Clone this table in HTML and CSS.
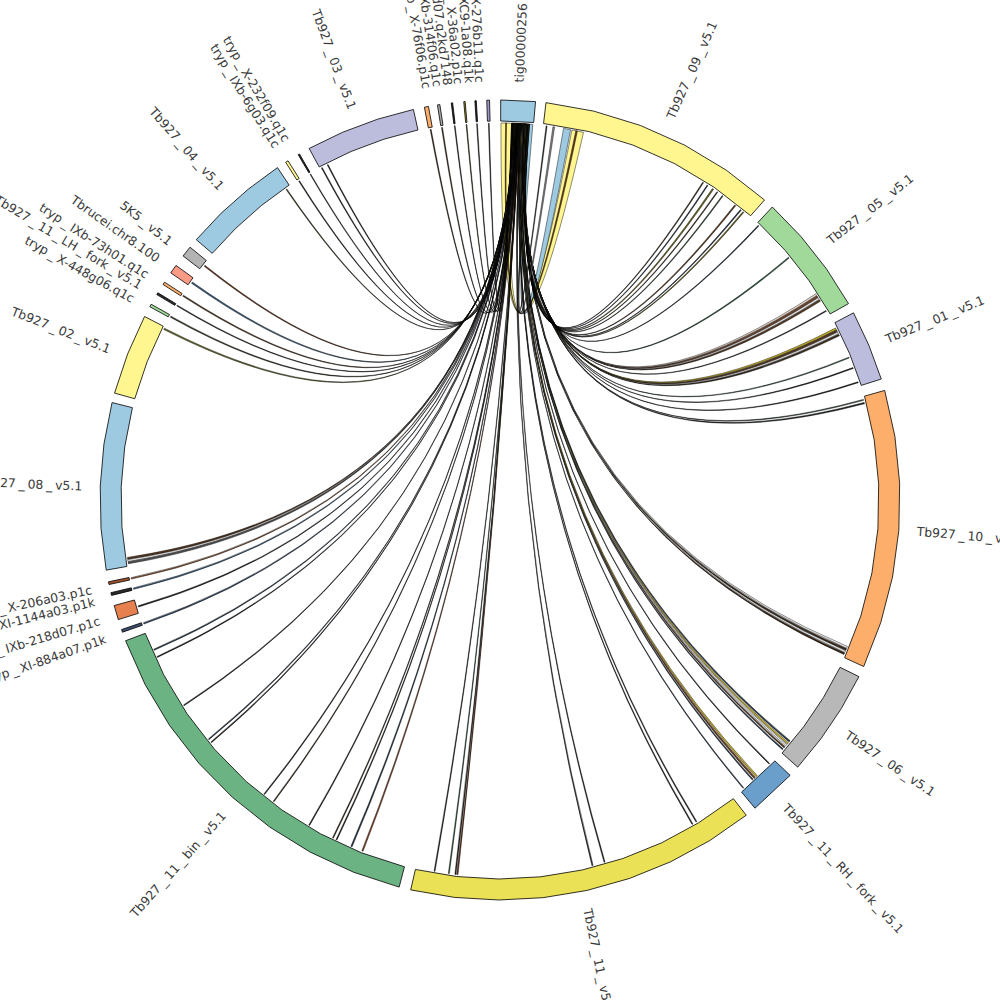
FILE: index.html
```html
<!DOCTYPE html>
<html lang="en">
<head>
<meta charset="utf-8">
<title>Chord diagram</title>
<link rel="stylesheet" href="styles.css">
</head>
<body>
<div id="chart" class="chart"></div>
<script src="script.js"></script>
</body>
</html>
```

FILE: styles.css
```css
html, body {
  margin: 0;
  padding: 0;
  background: #ffffff;
  overflow: hidden;
}
.chart {
  width: 1000px;
  height: 1000px;
}
.chart svg {
  display: block;
  width: 1000px;
  height: 1000px;
}
.sector {
  stroke: #000000;
  stroke-width: 0.8;
  stroke-linejoin: miter;
}
.chord {
  stroke: #000000;
  stroke-width: 0.45;
  stroke-linejoin: round;
}
.label {
  font-family: "DejaVu Sans", "Liberation Sans", sans-serif;
  font-size: 12.4px;
  fill: #3a3a3a;
  dominant-baseline: central;
}
```

FILE: script.js
```js
(function () {
  var CX = 500, CY = 500, RO = 400, RI = 379, RC = 377, RL = 418;

  function P(r, d) {
    var a = d * Math.PI / 180;
    return [CX + r * Math.sin(a), CY - r * Math.cos(a)];
  }
  function f(p) { return p[0].toFixed(2) + ' ' + p[1].toFixed(2); }

  // name, start, end, colour, label angle
  var S = [
    ['tig00000256', 0.1, 5.1, '#9ecae1', 2.6],
    ['Tb927_09_v5.1', 6.6, 41.4, '#fff68f', 24.0],
    ['Tb927_05_v5.1', 42.9, 60.6, '#a1d99b', 51.8],
    ['Tb927_01_v5.1', 62.1, 72.4, '#bcbddc', 67.4],
    ['Tb927_10_v5.1', 74.1, 114.6, '#fdae6b', 94.3],
    ['Tb927_06_v5.1', 116.2, 131.9, '#b8b8b8', 124.0],
    ['Tb927_11_RH_fork_v5.1', 133.5, 140.4, '#6a9ecb', 137.0],
    ['Tb927_11_v5.1', 142.0, 192.9, '#ebe157', 167.9],
    ['Tb927_11_bin_v5.1', 194.6, 249.4, '#6bb383', 221.5],
    ['tryp_XI-884a07.p1k', 250.7, 251.1, '#3c4f6e', 250.7],
    ['tryp_IXb-218d07.p1c', 252.6, 254.7, '#e6814f', 253.3],
    ['tryp_XI-1144a03.p1k', 256.2, 256.6, '#2a2a2a', 256.0],
    ['tryp_X-206a03.p1c', 257.8, 258.2, '#a0522d', 257.7],
    ['Tb927_08_v5.1', 259.9, 284.1, '#9ecae1', 272.0],
    ['Tb927_02_v5.1', 285.5, 297.3, '#fff68f', 291.2],
    ['tryp_X-448g06.q1c', 298.9, 299.3, '#a1d99b', 298.8],
    ['Tb927_11_LH_fork_v5.1', 300.9, 301.2, '#2a2a2a', 300.9],
    ['tryp_IXb-73h01.q1c', 302.6, 303.0, '#fdae6b', 302.6],
    ['Tbrucei.chr8.100', 304.6, 305.9, '#fb9a85', 305.2],
    ['5K5_v5.1', 307.6, 309.2, '#b3b3b3', 308.1],
    ['Tb927_04_v5.1', 310.6, 326.2, '#9ecae1', 318.3],
    ['tryp_IXb-6g03.q1c', 327.6, 328.0, '#fff68f', 327.8],
    ['tryp_X-232f09.q1c', 329.7, 329.9, '#2a2a2a', 329.4],
    ['Tb927_03_v5.1', 331.5, 347.5, '#bcbddc', 339.4],
    ['tryp_X-76f06.p1c', 349.1, 349.7, '#fdae6b', 350.0],
    ['tryp_IXb-314f06.q1c', 351.0, 351.35, '#aaaaaa', 351.5],
    ['tryp_X-11d07.q2kd7148', 353.0, 353.2, '#2a2a2a', 352.9],
    ['tryp_X-36a02.p1c', 354.8, 355.0, '#b5a020', 354.4],
    ['tryp_IXC9-1a08.q1k', 356.4, 356.6, '#2a2a2a', 355.9],
    ['tryp_X-276b11.q1c', 358.1, 358.5, '#9e9ac8', 357.3]
  ];

  // far-end angle, width, fill
  var T = [
    [7.1, 0.15, '#2b3a2b'], [8.2, 0.25, '#8a8a8a'],
    [32.6, 0.15, '#3a2a1a'], [33.4, 0.15, '#1e2d3d'], [34.4, 0.22, '#6b6420'], [35.2, 0.14, '#3a2a1a'],
    [36.2, 0.15, '#2f4a2f'], [38.6, 0.2, '#5a3a20'], [39.7, 0.15, '#1e2d3d'], [40.2, 0.18, '#6b6420'],
    [43.3, 0.14, '#1e2d3d'], [50.0, 0.18, '#2f5f3f'],
    [57.0, 0.28, '#f0e0d0'], [57.35, 0.28, '#7a4a30'], [57.7, 0.28, '#f0f0f0'], [58.05, 0.28, '#5a3a20'], [59.9, 0.14, '#222222'],
    [63.0, 0.28, '#c9b52a'], [63.35, 0.28, '#5a3a20'], [63.7, 0.28, '#eeeeee'], [64.05, 0.28, '#3a2a1a'],
    [67.8, 0.14, '#2f5f3f'], [69.5, 0.14, '#222222'], [71.8, 0.14, '#222222'],
    [74.6, 0.15, '#2f4a2f'], [75.1, 0.2, '#222222'],
    [113.0, 0.28, '#eeeeee'], [113.35, 0.28, '#3a2a1a'], [113.7, 0.28, '#eeeeee'], [114.05, 0.28, '#3a2a1a'],
    [129.8, 0.22, '#26394d'], [130.2, 0.25, '#c9b52a'], [130.6, 0.25, '#eeeeee'], [131.0, 0.22, '#5a3a20'], [131.4, 0.18, '#26394d'],
    [134.4, 0.14, '#222222'], [137.1, 0.25, '#c9b52a'], [137.5, 0.25, '#6b3a1f'], [137.9, 0.18, '#26394d'], [139.8, 0.14, '#26394d'],
    [148.6, 0.15, '#222222'], [149.3, 0.15, '#222222'], [163.9, 0.15, '#222222'], [165.8, 0.18, '#3a3a3a'],
    [186.5, 0.2, '#6b3a1f'], [186.8, 0.15, '#222222'], [187.8, 0.15, '#2f5f3f'], [190.0, 0.15, '#222222'],
    [201.4, 0.2, '#8b4a2b'], [203.2, 0.2, '#26394d'], [205.7, 0.15, '#222222'], [206.3, 0.15, '#3a2a1a'],
    [210.4, 0.15, '#222222'], [216.9, 0.15, '#3a2a1a'], [218.7, 0.15, '#222222'], [230.0, 0.15, '#222222'],
    [230.6, 0.15, '#26394d'], [237.0, 0.15, '#222222'], [245.4, 0.15, '#222222'], [246.6, 0.18, '#26394d'],
    [250.9, 0.22, '#3c4f6e'], [253.6, 0.18, '#222222'], [256.4, 0.22, '#3c5f80'], [258.0, 0.22, '#8b5a3b'],
    [260.4, 0.28, '#555555'], [260.75, 0.28, '#eeeeee'], [261.1, 0.28, '#5a3a20'],
    [297.0, 0.22, '#6b6b2a'],
    [299.1, 0.18, '#3a3a2a'], [301.05, 0.14, '#222222'], [302.8, 0.18, '#5a3a20'], [305.2, 0.22, '#3c5f80'], [308.4, 0.18, '#6b3a1f'],
    [325.5, 0.14, '#3a3a1a'], [327.8, 0.14, '#222222'], [329.8, 0.12, '#222222'], [331.8, 0.14, '#222222'], [332.8, 0.14, '#222222'],
    [349.4, 0.15, '#3a2a1a'], [351.15, 0.15, '#3a2a1a'], [353.1, 0.12, '#222222'], [354.9, 0.12, '#3a3a1a'],
    [356.5, 0.12, '#222222'], [358.3, 0.12, '#222222']
  ];

  function sectorPath(s, e) {
    var n = Math.max(1, Math.ceil((e - s) / 7));
    var pts = [], i;
    for (i = 0; i <= n; i++) pts.push(P(RO, s + (e - s) * i / n));
    for (i = n; i >= 0; i--) pts.push(P(RI, s + (e - s) * i / n));
    return 'M' + pts.map(f).join(' L') + ' Z';
  }

  function chordPath(s1, s2, t1, t2) {
    var c = CX + ' ' + CY;
    return 'M' + f(P(RC, s1)) + ' L' + f(P(RC, s2)) +
      ' Q' + c + ' ' + f(P(RC, t1)) + ' L' + f(P(RC, t2)) +
      ' Q' + c + ' ' + f(P(RC, s1)) + ' Z';
  }

  function esc(t) {
    return t.replace(/&/g, '&amp;').replace(/</g, '&lt;');
  }

  function labelBody(name) {
    var parts = name.split('_');
    var out = esc(parts[0]);
    for (var i = 1; i < parts.length; i++) {
      out += '<tspan dx="2.8">_</tspan><tspan dx="2.8">' + esc(parts[i]) + '</tspan>';
    }
    return out;
  }

  var svg = [];
  svg.push('<svg xmlns="http://www.w3.org/2000/svg" viewBox="0 0 1000 1000" width="1000" height="1000">');

  // wide U-shaped ribbons to Tb927_09
  svg.push('<path class="chord" fill="#fff68f" d="' + chordPath(0.15, 1.75, 11.0, 12.8) + '"/>');
  svg.push('<path class="chord" fill="#9ecae1" d="' + chordPath(4.5, 5.0, 9.7, 10.8) + '"/>');
  svg.push('<path class="chord" fill="#6b3a1f" d="' + chordPath(0.85, 1.0, 11.6, 11.85) + '"/>');

  // chords from tig00000256
  var list = T.map(function (t) {
    return { a: t[0], w: t[1], c: t[2], d: (t[0] - 5.1 + 360) % 360 };
  });
  list.sort(function (x, y) { return y.d - x.d; });
  var lo = 1.8, hi = 4.45, n = list.length;
  list.forEach(function (t, i) {
    var s1 = lo + (hi - lo) * i / (n - 1) - 0.04;
    var s2 = s1 + 0.08;
    var t1 = t.a - t.w / 2, t2 = t.a + t.w / 2;
    svg.push('<path class="chord" fill="' + t.c + '" d="' + chordPath(s1, s2, t1, t2) + '"/>');
  });

  // sectors
  S.forEach(function (s) {
    svg.push('<path class="sector" fill="' + s[3] + '" d="' + sectorPath(s[1], s[2]) + '"/>');
  });

  // labels
  S.forEach(function (s) {
    var ang = s[4];
    var p = P(RL, ang);
    var outward = ang < 190;
    var rot = outward ? ang - 90 : ang + 90;
    svg.push('<text class="label" text-anchor="' + (outward ? 'start' : 'end') +
      '" transform="translate(' + p[0].toFixed(2) + ' ' + p[1].toFixed(2) + ') rotate(' + rot.toFixed(2) + ')">' +
      labelBody(s[0]) + '</text>');
  });

  svg.push('</svg>');
  document.getElementById('chart').innerHTML = svg.join('');
})();
```
